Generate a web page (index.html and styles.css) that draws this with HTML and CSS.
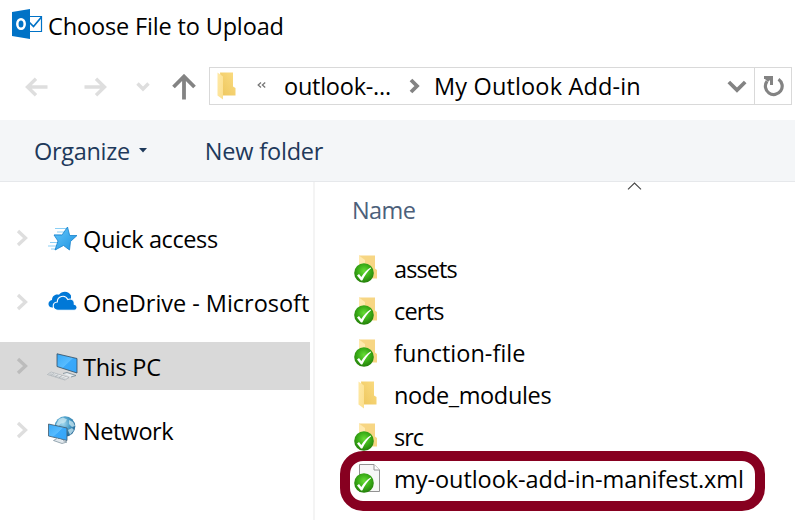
FILE: index.html
```html
<!DOCTYPE html>
<html lang="en">
<head>
<meta charset="utf-8">
<title>Choose File to Upload</title>
<link rel="stylesheet" href="styles.css">
</head>
<body>
<svg class="defs" width="0" height="0" aria-hidden="true">
  <defs>
    <linearGradient id="gold" x1="0" y1="1" x2="1" y2="0"><stop offset="0" stop-color="#edc65d"/><stop offset="1" stop-color="#fbdc82"/></linearGradient>
    <linearGradient id="flap" x1="0" y1="0" x2="1" y2="1"><stop offset="0" stop-color="#ffe9a6"/><stop offset="1" stop-color="#fbdf8e"/></linearGradient>
    <radialGradient id="green" cx=".5" cy=".4" r=".58"><stop offset="0" stop-color="#66dc35"/><stop offset=".55" stop-color="#3bae18"/><stop offset="1" stop-color="#25820b"/></radialGradient>
    <linearGradient id="screen" x1="0" y1="0" x2="1" y2="1"><stop offset="0" stop-color="#37a8f6"/><stop offset=".5" stop-color="#58bcff"/><stop offset=".52" stop-color="#3aa9fa"/><stop offset="1" stop-color="#35a5f8"/></linearGradient>
    <linearGradient id="star" x1="0" y1="0" x2="1" y2="1"><stop offset="0" stop-color="#64c8fc"/><stop offset="1" stop-color="#1e92e0"/></linearGradient>
    <radialGradient id="globe" cx=".4" cy=".35" r=".7"><stop offset="0" stop-color="#a6dbf0"/><stop offset=".5" stop-color="#4a9dc8"/><stop offset="1" stop-color="#1f608f"/></radialGradient>
    <symbol id="folder" viewBox="0 0 19 28"><path d="M3 .5h13V14.500l2.500 1.500v7.500H5z" fill="url(#gold)"/><path d="M.5.500 6 4.500V27.500L.5 23.500z" fill="url(#flap)"/></symbol>
    <symbol id="folder-back" viewBox="0 0 19 28"><path d="M1 .5h16v13l2 1.500v8.500H1z" fill="#f7d684"/><path d="M1 .5 7 5v22H1z" fill="#ffe9ae"/></symbol>
    <symbol id="check" viewBox="0 0 20 20"><circle cx="10" cy="10" r="9.800" fill="url(#green)"/><path d="M3 12.500 5 11l2.300 3C10 9.500 13 6.500 16.500 4.400l.6.800C13.500 8.500 10.600 12.500 8.300 17.500H7z" fill="#fff"/></symbol>
    <symbol id="chev" viewBox="0 0 12 18"><path d="m2 2 7.500 7L2 16" fill="none" stroke="currentColor" stroke-width="3.300"/></symbol>
  </defs>
</svg>
<div class="dialog">
  <header class="titlebar">
    <svg class="app-icon" width="31" height="32" viewBox="0 0 31 32"><path d="M17 8.500h12.500v15H17" fill="#fff" stroke="#0072c6" stroke-width="1.200"/><path d="m17 14 4.500 4.500L29.500 9" fill="none" stroke="#0072c6" stroke-width="1.700"/><path d="M0 4 18 1v30L0 28z" fill="#0072c6"/><ellipse cx="9" cy="16" rx="3.700" ry="4.800" fill="none" stroke="#fff" stroke-width="2.500"/></svg>
    <h1 class="title">Choose File to Upload</h1>
  </header>

  <div class="navbar">
    <div class="history">
      <svg width="23" height="20" viewBox="0 0 23 20"><path d="M22.500 10H3M11 1.800 2.500 10l8.500 8.200" class="pale"/></svg>
      <svg width="23" height="20" viewBox="0 0 23 20"><path d="M.5 10H20M12 1.800l8.500 8.200-8.500 8.200" class="pale"/></svg>
      <svg class="recent" width="14" height="10" viewBox="0 0 14 10"><path d="m1.500 1.500 5.500 5.500 5.500-5.500" class="pale"/></svg>
      <svg class="up" width="24" height="26" viewBox="0 0 24 26"><path d="M12 25.500V3M1.500 13 12 2.500 22.500 13" class="dark"/></svg>
    </div>
    <div class="address">
      <svg class="addr-folder" width="19" height="28"><use href="#folder"/></svg>
      <svg class="overflow" width="9" height="6" viewBox="0 0 9 6"><path d="M4 .5 1.200 3 4 5.500M8.200.5 5.400 3l2.800 2.500" fill="none" stroke="#777" stroke-width="1.300"/></svg>
      <span class="crumb parent">outlook-...</span>
      <svg class="crumb-sep" width="12" height="16" viewBox="0 0 12 16"><path d="m2 2 6 6-6 6" class="dark"/></svg>
      <span class="crumb current">My Outlook Add-in</span>
      <svg class="drop" width="20" height="13" viewBox="0 0 20 13"><path d="m1.800 2 8.200 8 8.200-8" class="dark"/></svg>
      <span class="refresh"><svg width="22" height="22" viewBox="0 0 22 22"><path d="M16.500 4.200A8.400 8.400 0 1 1 5 6.200" fill="none" stroke="#838383" stroke-width="3.200"/><path d="M2 1h9v9H8V5L6 7 3 4H2z" fill="#838383"/></svg></span>
    </div>
  </div>

  <div class="toolbar">
    <span class="organize">Organize</span>
    <svg class="caret" width="8" height="5"><path d="M0 0h8L4 4.500z" fill="#1e395b"/></svg>
    <span class="new-folder">New folder</span>
  </div>

  <div class="content">
    <nav class="tree">
      <div class="node">
        <svg class="expander" width="12" height="18"><use href="#chev"/></svg>
        <svg class="node-icon star" width="32" height="28" viewBox="0 0 32 28"><path d="M8 2.500h11M10 6h8M7 9h7M3 16.500h8M1 20h9M4 23h6" stroke="#8bcff5" stroke-width="1"/><path d="m20.500 1 2.200 8.500H30l-6.500 6L22.500 24l-6-4.500-8.500 4.500 3-9L7 9h8z" fill="url(#star)" stroke="#1681cc" stroke-width=".8"/></svg>
        <span class="label quick">Quick access</span>
      </div>
      <div class="node">
        <svg class="expander" width="12" height="18"><use href="#chev"/></svg>
        <svg class="node-icon cloud" width="32" height="28" viewBox="0 0 32 28"><path d="M7 19.500H5.500C0 19.500.5 12.500 5 12c0-4 3.500-6.500 7-5.200C14.500 2.500 22 2.500 24 7.500v4H14z" fill="#0078d7"/><path d="M11 22.200c-6 0-6.500-7.700-.7-8.200 0-6 7.700-8 10.500-2.500 4-1.500 7 1 6.500 4.700 4 .8 3.500 6 0 6z" fill="#0078d7" stroke="#fff" stroke-width="1.100"/></svg>
        <span class="label onedrive">OneDrive - Microsoft</span>
      </div>
      <div class="node selected">
        <svg class="expander" width="12" height="18"><use href="#chev"/></svg>
        <svg class="node-icon pc" width="32" height="28" viewBox="0 0 32 28"><path d="m10 .8 20 4.700V20L10 13.500z" fill="url(#screen)" stroke="#354d60" stroke-width=".8"/><path d="m16 20.500 4-1 9 3-5 1.500" fill="#e8edf0" stroke="#738692" stroke-width=".8"/><path d="m4 19 18 5.500-4 2.500L.5 21.500z" fill="#f3f4f5" stroke="#9aa3a9" stroke-width=".6"/><path d="m3 20.200 16.500 5.300M2 21l16 5.300M7 20l-3 2.500M11 21.500 8 24M15 22.500l-3 2.500" stroke="#9aa3a9" stroke-width=".5"/></svg>
        <span class="label pc-label">This PC</span>
      </div>
      <div class="node">
        <svg class="expander" width="12" height="18"><use href="#chev"/></svg>
        <svg class="node-icon net" width="32" height="28" viewBox="0 0 32 28"><circle cx="18" cy="10.500" r="10.300" fill="url(#globe)"/><path d="m12 3 4-1.500 4 2-2 3-4 1-3 3-2-2zM22 4l4 2 2 4-3 1-3-3zM21 14l4-2 2 2-4 5z" fill="#cbe8f2" opacity=".75"/><path d="m1.500 8 18.500 4v12.500L1.500 20z" fill="url(#screen)" stroke="#42596a" stroke-width=".8"/><path d="m10 22.500-3.500 2 8.500 3 5-1.500-4-1.500" fill="#e1e8ed" stroke="#8395a2" stroke-width=".8"/></svg>
        <span class="label network">Network</span>
      </div>
    </nav>

    <main class="files">
      <svg class="sort" width="15" height="8" viewBox="0 0 15 8"><path d="M1 7.300 7.500 1 14 7.300" fill="none" stroke="#444" stroke-width="1.100"/></svg>
      <div class="column-head">Name</div>
      <div class="file"><svg class="file-icon" width="26" height="30"><use href="#folder-back" x="4" y="0" width="19" height="28"/><use href="#check" x="0" y="8" width="20" height="20"/></svg><span class="f-assets">assets</span></div>
      <div class="file"><svg class="file-icon" width="26" height="30"><use href="#folder-back" x="4" y="0" width="19" height="28"/><use href="#check" x="0" y="8" width="20" height="20"/></svg><span class="f-certs">certs</span></div>
      <div class="file"><svg class="file-icon" width="26" height="30"><use href="#folder-back" x="4" y="0" width="19" height="28"/><use href="#check" x="0" y="8" width="20" height="20"/></svg><span class="f-function">function-file</span></div>
      <div class="file"><svg class="file-icon" width="26" height="30"><use href="#folder" x="4" y="0" width="19" height="28"/></svg><span class="f-modules">node_modules</span></div>
      <div class="file"><svg class="file-icon" width="26" height="30"><use href="#folder-back" x="4" y="0" width="19" height="28"/><use href="#check" x="0" y="8" width="20" height="20"/></svg><span class="f-src">src</span></div>
      <div class="file marked"><svg class="file-icon" width="26" height="30"><path d="M5.500.5H20l5.500 5.500v21.500h-20z" fill="#f7f7f7" stroke="#929292"/><path d="M20 .5V6h5.500" fill="#fff" stroke="#929292"/><use href="#check" x="0" y="9" width="20" height="20"/></svg><span class="f-manifest">my-outlook-add-in-manifest.xml</span></div>
    </main>
  </div>
</div>
</body>
</html>
```

FILE: styles.css
```css
* { box-sizing: border-box; }
body { margin: 0; background: #fff; color: #000; font: 23.5px/32px "Open Sans", "Noto Sans", sans-serif; overflow: hidden; }
svg { display: block; flex: none; }
span { white-space: nowrap; }
.defs { position: absolute; }
.dialog { width: 795px; height: 520px; overflow: hidden; display: flex; flex-direction: column; }
.pale { fill: none; stroke: #dedede; stroke-width: 3.4; }
.dark { fill: none; stroke: #838383; stroke-width: 3.8; }

.titlebar { height: 67px; display: flex; padding: 8px 0 0 12px; }
.title { margin: 2px 0 0 5px; font-size: inherit; font-weight: 400; letter-spacing: -.15px; white-space: nowrap; }

.navbar { height: 53px; display: flex; align-items: flex-start; }
.history { width: 209px; height: 39px; display: flex; align-items: center; padding-left: 25px; }
.history svg + svg { margin-left: 36px; }
.history .recent { margin-left: 29px; }
.history .up { margin-left: 22px; }
.address { width: 583px; height: 38px; border: 1px solid #d9d9d9; display: flex; align-items: center; padding-left: 7px; }
.overflow { margin: -3px 0 0 21px; }
.parent { width: 125px; margin-left: 18px; letter-spacing: -.25px; }
.current { margin-left: 13px; letter-spacing: .15px; }
.drop { margin-left: auto; margin-right: 7px; }
.refresh { width: 37px; height: 36px; border-left: 1px solid #d9d9d9; padding: 7px; }

.toolbar { height: 62px; display: flex; align-items: center; padding-left: 34px; background: #f4f6f8; border-bottom: 1px solid #e6e8eb; color: #1e395b; }
.organize { letter-spacing: -.3px; }
.caret { margin: 0 0 0 9px; }
.new-folder { margin-left: 58px; letter-spacing: -.2px; }

.content { flex: 1; display: flex; min-height: 0; }
.tree { width: 315px; border-right: 2px solid #f4f4f4; padding-top: 32px; display: flex; flex-direction: column; gap: 16px; }
.node { width: 310px; height: 48px; display: flex; align-items: center; padding-left: 16px; }
.expander { color: #dedede; }
.selected { background: #d9d9d9; }
.selected .expander { color: #bcbcbc; }
.node-icon { margin-left: 19px; }
.star { margin-top: 3px; }
.pc { margin-top: 2px; }
.label { margin: 2px 0 0 4px; }
.quick { letter-spacing: -.4px; }
.onedrive { letter-spacing: -.03px; }
.pc-label { letter-spacing: -.25px; }
.network { letter-spacing: -.5px; }

.files { flex: 1; padding-left: 25px; }
.sort { margin: 0 0 0 287px; }
.column-head { height: 32px; margin: 4px 0 23px 12px; color: #4c607a; letter-spacing: -.6px; }
.file { height: 42px; display: flex; align-items: center; padding-left: 14px; }
.file span { margin-top: -2px; }
.file-icon { margin-right: 14px; }
.f-assets { letter-spacing: -.9px; }
.f-certs { letter-spacing: -.8px; }
.f-modules { letter-spacing: -.35px; }
.f-src { letter-spacing: -1px; }
.f-manifest { letter-spacing: -.05px; }
.marked { width: 425px; height: 60px; margin-top: -8px; padding-left: 4px; border: 10px solid #870020; border-radius: 23px; }
.marked .file-icon { margin-top: -4px; }
.marked span { margin-top: -4px; }
```
